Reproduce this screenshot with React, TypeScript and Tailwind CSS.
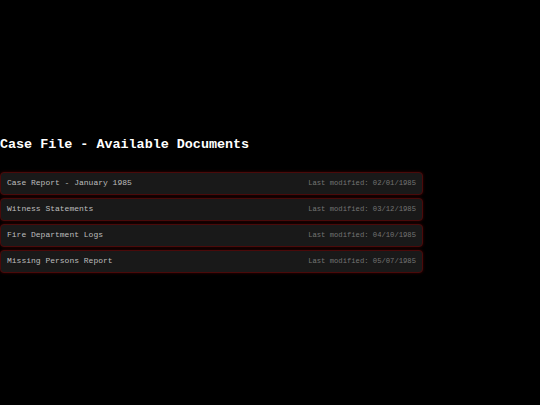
const documents = [
  { name: "Case Report - January 1985", modified: "02/01/1985" },
  { name: "Witness Statements", modified: "03/12/1985" },
  { name: "Fire Department Logs", modified: "04/10/1985" },
  { name: "Missing Persons Report", modified: "05/07/1985" },
];

export default function App() {
  return (
    <div className="min-h-screen bg-black flex flex-col justify-center font-['Liberation_Mono','Courier_New',monospace]">
      <div className="w-[423px]">
        <h2 className="text-[13.4px] leading-[20px] font-bold text-white pt-[2px] mb-[17px]">
          Case File - Available Documents
        </h2>
        <div className="flex flex-col gap-[3px]">
          {documents.map((doc) => (
            <div
              key={doc.name}
              className="h-[23px] flex items-center justify-between px-[6px] bg-[#191919] border border-[#4a0a0a] rounded-[4px] shadow-[0_0_3px_rgba(120,0,0,0.5)]"
            >
              <span className="text-[8px] text-[#bdbdbd]">{doc.name}</span>
              <span className="text-[7.2px] text-[#747474]">
                Last modified: {doc.modified}
              </span>
            </div>
          ))}
        </div>
      </div>
    </div>
  );
}
